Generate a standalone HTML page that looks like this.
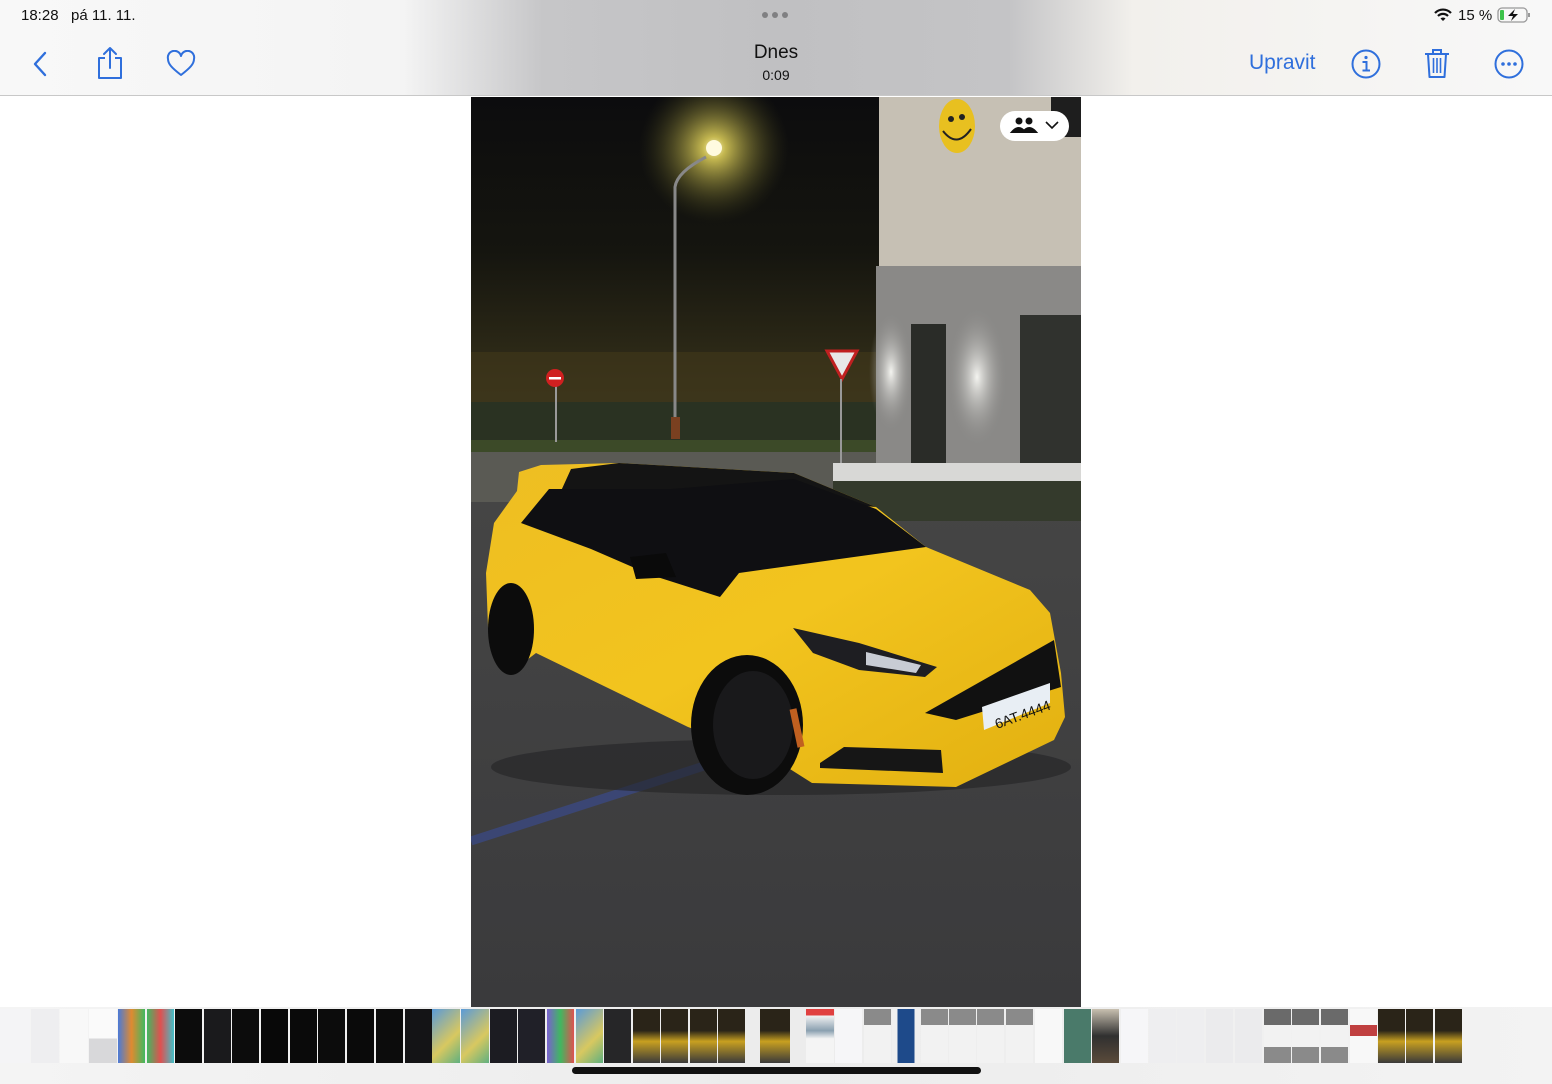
<!DOCTYPE html>
<html><head><meta charset="utf-8">
<style>
*{margin:0;padding:0;box-sizing:border-box}
html,body{width:1552px;height:1084px;overflow:hidden;background:#fff;font-family:"Liberation Sans",sans-serif}
#top{position:absolute;left:0;top:0;width:1552px;height:96px;background:linear-gradient(90deg,#f8f8f8 0%,#f4f4f4 26%,#c6c6c8 35%,#c0c0c2 50%,#c4c4c6 65%,#f2f0ec 73%,#f8f8f8 100%);border-bottom:1px solid #c8c8c8}
.t{position:absolute;color:#111}
.blue{color:#2f6fdc}
#photo{position:absolute;left:471px;top:97px;width:610px;height:910px}
#strip{position:absolute;left:0;top:1007px;width:1552px;height:77px;background:linear-gradient(90deg,#f4f4f4,#ececec 50%,#f3f3f3)}
.th{position:absolute;top:1009px;height:54px}
#home{position:absolute;left:572px;top:1067px;width:409px;height:7px;border-radius:4px;background:#111}
</style></head><body>
<div id="top">
 <div class="t" style="left:21px;top:7px;font-size:15px">18:28&nbsp;&nbsp;&nbsp;pá 11. 11.</div>
 <div style="position:absolute;left:762px;top:12px;width:28px;height:6px">
  <span style="position:absolute;left:0;top:0;width:6px;height:6px;border-radius:3px;background:#808082"></span>
  <span style="position:absolute;left:10px;top:0;width:6px;height:6px;border-radius:3px;background:#808082"></span>
  <span style="position:absolute;left:20px;top:0;width:6px;height:6px;border-radius:3px;background:#808082"></span>
 </div>
 <div class="t" style="left:0;width:1552px;text-align:center;top:42px;font-size:19px">Dnes</div>
 <div class="t" style="left:0;width:1552px;text-align:center;top:67px;font-size:14px">0:09</div>
 <div class="t" style="left:1458px;top:7px;font-size:15px">15 %</div>
 <svg style="position:absolute;left:1433px;top:8px" width="20" height="14" viewBox="0 0 20 14"><path d="M2 5 A11 11 0 0 1 18 5" stroke="#111" stroke-width="2.2" fill="none"/><path d="M5 8 A7 7 0 0 1 15 8" stroke="#111" stroke-width="2.2" fill="none"/><path d="M10 13 L7.5 10.5 A3.5 3.5 0 0 1 12.5 10.5Z" fill="#111"/></svg>
 <svg style="position:absolute;left:1497px;top:7px" width="36" height="16" viewBox="0 0 36 16"><rect x="1" y="1" width="29" height="14" rx="4" fill="none" stroke="#999" stroke-width="1.3"/><rect x="3" y="3" width="4" height="10" rx="1" fill="#3cc24a"/><path d="M32 6v4" stroke="#999" stroke-width="2"/><path d="M18 2 L11 9 H16 L14 14 L21 7 H16Z" fill="#111"/></svg>
 <svg style="position:absolute;left:30px;top:50px" width="20" height="28" viewBox="0 0 20 28"><path d="M15 3 L5 14 L15 25" stroke="#2f6fdc" stroke-width="2.4" fill="none" stroke-linecap="round" stroke-linejoin="round"/></svg>
 <svg style="position:absolute;left:95px;top:46px" width="30" height="34" viewBox="0 0 30 34"><path d="M10 12 H4 V32 H26 V12 H20" stroke="#2f6fdc" stroke-width="2" fill="none" stroke-linejoin="round"/><path d="M15 22 V2 M9 8 L15 2 L21 8" stroke="#2f6fdc" stroke-width="2" fill="none" stroke-linecap="round" stroke-linejoin="round"/></svg>
 <svg style="position:absolute;left:166px;top:50px" width="30" height="28" viewBox="0 0 30 28"><path d="M15 25 C6 18 2 14 2 9 A6.5 6.5 0 0 1 15 6 A6.5 6.5 0 0 1 28 9 C28 14 24 18 15 25Z" stroke="#2f6fdc" stroke-width="2" fill="none" stroke-linejoin="round"/></svg>
 <div class="t blue" style="left:1249px;top:51px;font-size:21px">Upravit</div>
 <svg style="position:absolute;left:1350px;top:48px" width="32" height="32" viewBox="0 0 32 32"><circle cx="16" cy="16" r="13.5" stroke="#2f6fdc" stroke-width="2" fill="none"/><circle cx="16" cy="9.5" r="1.6" fill="#2f6fdc"/><path d="M12.5 14 H16.5 V22 M12.5 22.5 H20" stroke="#2f6fdc" stroke-width="2" fill="none"/></svg>
 <svg style="position:absolute;left:1422px;top:46px" width="30" height="34" viewBox="0 0 30 34"><path d="M3 8 H27 M11 8 V4 H19 V8" stroke="#2f6fdc" stroke-width="2" fill="none"/><path d="M6 8 L7.5 31 H22.5 L24 8" stroke="#2f6fdc" stroke-width="2" fill="none" stroke-linejoin="round"/><path d="M11.5 12 V27 M15 12 V27 M18.5 12 V27" stroke="#2f6fdc" stroke-width="1.6"/></svg>
 <svg style="position:absolute;left:1493px;top:48px" width="32" height="32" viewBox="0 0 32 32"><circle cx="16" cy="16" r="13.5" stroke="#2f6fdc" stroke-width="2" fill="none"/><circle cx="10" cy="16" r="1.8" fill="#2f6fdc"/><circle cx="16" cy="16" r="1.8" fill="#2f6fdc"/><circle cx="22" cy="16" r="1.8" fill="#2f6fdc"/></svg>
</div>

<svg id="photo" viewBox="0 0 610 910" preserveAspectRatio="none">
 <defs>
  <radialGradient id="lamp" cx="0.5" cy="0.5" r="0.5"><stop offset="0" stop-color="#fff8c0"/><stop offset="0.15" stop-color="#f0e060" stop-opacity=".8"/><stop offset="1" stop-color="#404018" stop-opacity="0"/></radialGradient>
  <radialGradient id="glow" cx="0.5" cy="0.5" r="0.5"><stop offset="0" stop-color="#f4f4f0"/><stop offset="1" stop-color="#8a8987" stop-opacity="0"/></radialGradient>
  <linearGradient id="sky" x1="0" y1="0" x2="0" y2="1"><stop offset="0" stop-color="#0c0c0e"/><stop offset="0.5" stop-color="#15150f"/><stop offset="0.8" stop-color="#2a2716"/><stop offset="1" stop-color="#3a3520"/></linearGradient>
  <linearGradient id="road" x1="0" y1="0" x2="0" y2="1"><stop offset="0" stop-color="#4e4e4c"/><stop offset="1" stop-color="#3a3a3c"/></linearGradient>
  <linearGradient id="body" x1="0" y1="0" x2="1" y2="1"><stop offset="0" stop-color="#eebe22"/><stop offset="0.5" stop-color="#f2c41e"/><stop offset="1" stop-color="#e2b010"/></linearGradient>
 </defs>
 <rect width="610" height="910" fill="url(#road)"/>
 <rect width="610" height="310" fill="url(#sky)"/>
 <rect x="0" y="255" width="410" height="55" fill="#3e361a" opacity=".7"/>
 <rect x="0" y="305" width="410" height="40" fill="#2a3222"/>
 <rect x="0" y="343" width="410" height="12" fill="#3c4a28"/>
 <rect x="0" y="355" width="410" height="50" fill="#5a5a54"/>
 <circle cx="243" cy="51" r="75" fill="url(#lamp)"/>
 <circle cx="243" cy="51" r="8" fill="#fffbe0"/>
 <path d="M204 340 V90 Q206 75 235 60" stroke="#888" stroke-width="3" fill="none"/>
 <rect x="200" y="320" width="9" height="22" fill="#7a4020"/>
 <path d="M85 285 V345" stroke="#999" stroke-width="2"/>
 <circle cx="84" cy="281" r="9" fill="#d02020"/><rect x="78" y="280" width="12" height="2.5" fill="#fff"/>
 <path d="M356 254 L386 254 L371 282Z" fill="#e8e8e8" stroke="#c02020" stroke-width="3"/>
 <path d="M370 282 V380" stroke="#999" stroke-width="2"/>
 <rect x="408" y="0" width="202" height="169" fill="#c6c0b4"/>
 <rect x="580" y="0" width="30" height="40" fill="#1e1e1e"/>
 <rect x="405" y="169" width="205" height="214" fill="#8a8987"/>
 <ellipse cx="420" cy="275" rx="22" ry="60" fill="url(#glow)"/>
 <ellipse cx="506" cy="280" rx="30" ry="70" fill="url(#glow)"/>
 <rect x="440" y="227" width="35" height="146" fill="#2a2c28"/>
 <rect x="549" y="218" width="61" height="166" fill="#30322e"/>
 <rect x="362" y="366" width="248" height="22" fill="#d8d8d6"/>
 <rect x="362" y="384" width="248" height="40" fill="#343a2c"/>
 <ellipse cx="486" cy="29" rx="18" ry="27" fill="#e8c020"/>
 <circle cx="480" cy="22" r="3" fill="#222"/><circle cx="491" cy="20" r="3" fill="#222"/>
 <path d="M472 34 Q486 52 500 32" stroke="#222" stroke-width="2" fill="none"/>
 <path d="M0 744 L233 669" stroke="#3a4a8a" stroke-width="9" opacity=".7"/>
 <!-- car -->
 <ellipse cx="310" cy="670" rx="290" ry="28" fill="#232325" opacity=".6"/>
 <path d="M48 375 L70 368 L148 366 L323 376 L405 410 L455 450 L559 493 L579 516 L590 576 L594 620 L583 643 L485 690 L341 686 L300 660 L217 630 L65 556 L39 576 L17 530 L15 476 L23 426 L46 394 Z" fill="url(#body)"/>
 <path d="M100 372 L148 366 L323 376 L405 410 L200 392 L90 394Z" fill="#141414"/>
 <path d="M50 426 L78 392 L200 392 L323 382 L405 412 L455 450 L268 476 L249 500 L180 478 L120 452Z" fill="#0f0f12"/>
 <path d="M159 460 L195 456 L205 480 L165 482Z" fill="#0a0a0a"/>
 <path d="M322 531 L388 546 L466 570 L454 580 L388 573 L342 556Z" fill="#1e1e22"/>
 <path d="M395 555 L450 568 L445 576 L395 568Z" fill="#c8ccd4"/>
 <path d="M454 616 L583 543 L590 590 L485 623Z" fill="#111"/>
 <path d="M511 610 L579 586 L579 606 L513 633Z" fill="#e8eef4"/>
 <text x="520" y="626" font-family="Liberation Sans,sans-serif" font-size="14" fill="#111" transform="rotate(-20 540 612)">6AT.4444</text>
 <path d="M349 666 L373 650 L470 653 L472 676 L349 671Z" fill="#161616"/>
 <ellipse cx="40" cy="532" rx="23" ry="46" fill="#0c0c0c"/>
 <ellipse cx="276" cy="628" rx="56" ry="70" fill="#0c0c0c"/>
 <ellipse cx="282" cy="628" rx="40" ry="54" fill="#19191b"/>
 <path d="M322 612 L330 650" stroke="#c06020" stroke-width="7"/>
 <rect x="529" y="14" width="69" height="30" rx="15" fill="#fff"/>
 <circle cx="548" cy="24" r="3.5" fill="#111"/><circle cx="558" cy="24" r="3.5" fill="#111"/>
 <path d="M541 35 Q548 27 554 35Z M552 35 Q558 27 565 35Z" fill="#111" stroke="#111" stroke-width="2"/>
 <path d="M575 25 L581 31 L587 25" stroke="#111" stroke-width="1.6" fill="none"/>
</svg>

<div id="strip"></div>
<div id="thumbs"></div>
<div id="home"></div>
<script>
var d=[
[0,30,'#f4f4f6'],[31,28,'#eeeef0'],[60,28,'#f8f8f8'],[89,28,'linear-gradient(#fafafa 55%,#d8d8da 55%)'],
[118,27,'linear-gradient(90deg,#4a7ad8,#e08a30 50%,#40b860)'],[147,27,'linear-gradient(90deg,#40b860,#e05050 50%,#40c0c8)'],
[175,27,'#0c0c0c'],[204,27,'#1a1a1c'],[232,27,'#0c0c0c'],[261,27,'#080808'],[290,27,'#0a0a0a'],[318,27,'#0c0c0c'],[347,27,'#0a0a0a'],[376,27,'#0c0c0c'],[405,27,'#141416'],
[432,28,'linear-gradient(135deg,#5a9ad8,#d8c860 60%,#60b080)'],[461,28,'linear-gradient(135deg,#5a9ad8,#d8c860 60%,#60b080)'],
[490,27,'#1c1c22'],[518,27,'#202028'],[547,27,'linear-gradient(90deg,#7a60d0,#40b860 50%,#e05050)'],[576,27,'linear-gradient(135deg,#5a9ad8,#d8c860 60%,#60b080)'],[604,27,'#262628'],
[633,27,'linear-gradient(#2a2418 40%,#c8a020 60%,#3a3a3a)'],[661,27,'linear-gradient(#2a2418 40%,#c8a020 60%,#3a3a3a)'],[690,27,'linear-gradient(#2a2418 40%,#c8a020 60%,#3a3a3a)'],[718,27,'linear-gradient(#2a2418 40%,#c8a020 60%,#3a3a3a)'],
[760,30,'linear-gradient(#2a2418 40%,#c8a020 60%,#3a3a3a)'],[806,28,'linear-gradient(#e04040 12%,#f4f4f4 12%,#8aa0b0 40%,#f4f4f4 55%)'],[835,27,'#f6f6f8'],
[864,27,'linear-gradient(#8a8a8a 30%,#f2f2f2 30%)'],[892,28,'linear-gradient(90deg,#f0f0f0 20%,#1e4a8a 20%,#1e4a8a 80%,#f0f0f0 80%)'],[921,27,'linear-gradient(#8a8a8a 30%,#f2f2f2 30%)'],[949,27,'linear-gradient(#8a8a8a 30%,#f2f2f2 30%)'],[977,27,'linear-gradient(#8a8a8a 30%,#f2f2f2 30%)'],[1006,27,'linear-gradient(#8a8a8a 30%,#f2f2f2 30%)'],[1035,27,'#f8f8f8'],
[1064,27,'#4a7a6a'],[1092,27,'linear-gradient(#c8c0b0,#303030 50%,#5a4a3a)'],[1121,27,'#f6f6f8'],[1149,27,'#eeeef0'],[1177,27,'#eeeef0'],[1206,27,'#ebebed'],[1235,27,'#ebebed'],
[1264,27,'linear-gradient(#6a6a6a 30%,#f2f2f2 30%,#f2f2f2 70%,#8a8a8a 70%)'],[1292,27,'linear-gradient(#6a6a6a 30%,#f2f2f2 30%,#f2f2f2 70%,#8a8a8a 70%)'],[1321,27,'linear-gradient(#6a6a6a 30%,#f2f2f2 30%,#f2f2f2 70%,#8a8a8a 70%)'],[1350,27,'linear-gradient(#f8f8f8 30%,#c04040 30%,#c04040 50%,#f8f8f8 50%)'],
[1378,27,'linear-gradient(#2a2418 40%,#c8a020 60%,#3a3a3a)'],[1406,27,'linear-gradient(#2a2418 40%,#c8a020 60%,#3a3a3a)'],[1435,27,'linear-gradient(#2a2418 40%,#c8a020 60%,#3a3a3a)']];
var h='';d.forEach(function(a){h+='<div class="th" style="left:'+a[0]+'px;width:'+a[1]+'px;background:'+a[2]+'"></div>'});
document.getElementById('thumbs').innerHTML=h;
</script>
</body></html>
